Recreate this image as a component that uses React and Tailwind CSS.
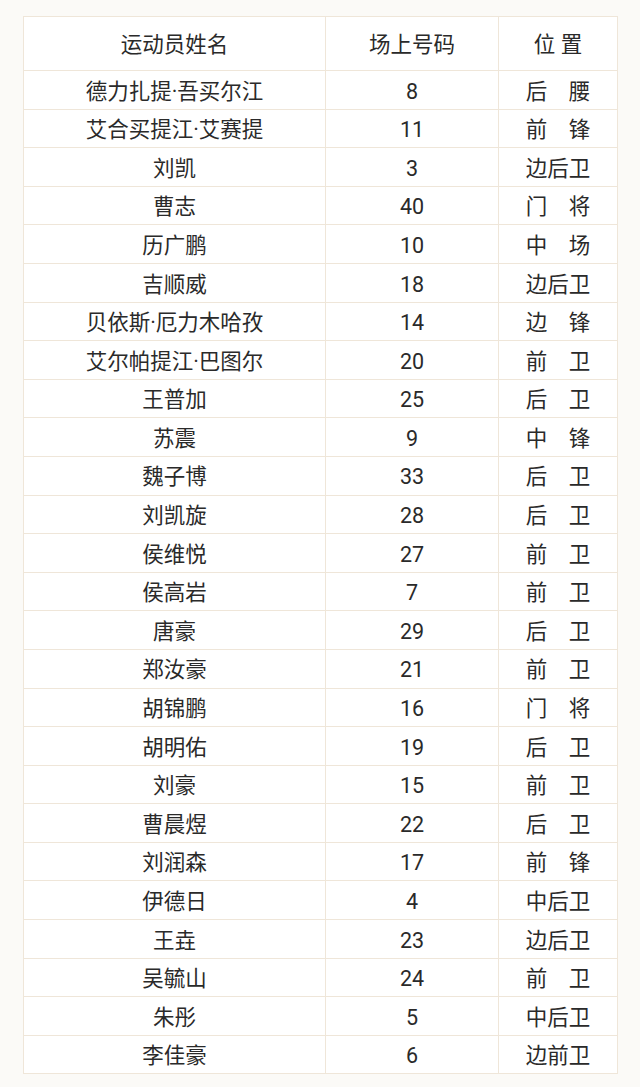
const players = [
  ['德力扎提·吾买尔江', '8', '后　腰'],
  ['艾合买提江·艾赛提', '11', '前　锋'],
  ['刘凯', '3', '边后卫'],
  ['曹志', '40', '门　将'],
  ['历广鹏', '10', '中　场'],
  ['吉顺威', '18', '边后卫'],
  ['贝依斯·厄力木哈孜', '14', '边　锋'],
  ['艾尔帕提江·巴图尔', '20', '前　卫'],
  ['王普加', '25', '后　卫'],
  ['苏震', '9', '中　锋'],
  ['魏子博', '33', '后　卫'],
  ['刘凯旋', '28', '后　卫'],
  ['侯维悦', '27', '前　卫'],
  ['侯高岩', '7', '前　卫'],
  ['唐豪', '29', '后　卫'],
  ['郑汝豪', '21', '前　卫'],
  ['胡锦鹏', '16', '门　将'],
  ['胡明佑', '19', '后　卫'],
  ['刘豪', '15', '前　卫'],
  ['曹晨煜', '22', '后　卫'],
  ['刘润森', '17', '前　锋'],
  ['伊德日', '4', '中后卫'],
  ['王垚', '23', '边后卫'],
  ['吴毓山', '24', '前　卫'],
  ['朱彤', '5', '中后卫'],
  ['李佳豪', '6', '边前卫'],
]

function Row({ cells, header }) {
  return (
    <div className={`grid grid-cols-[301px_173px_1fr] border-t border-[#efe6d9] ${header ? 'h-[53px] border-t-0' : 'h-[38.6px]'}`}>
      {cells.map((c, i) => (
        <div
          key={i}
          className={`flex items-center justify-center pt-[3px] ${i > 0 ? 'border-l border-[#efe6d9]' : ''}`}
        >
          {c}
        </div>
      ))}
    </div>
  )
}

export default function App() {
  return (
    <div className="min-h-[1087px] bg-[#fbfaf7] pt-[16px] pl-[23px] pr-[22px] text-[21.5px] text-[#2a2a2a] font-['Roboto','Noto_Sans_CJK_SC',sans-serif]">
      <div className="bg-white border border-[#efe6d9] leading-none">
        <Row header cells={['运动员姓名', '场上号码', '位 置']} />
        {players.map((p, i) => (
          <Row key={i} cells={p} />
        ))}
      </div>
    </div>
  )
}
